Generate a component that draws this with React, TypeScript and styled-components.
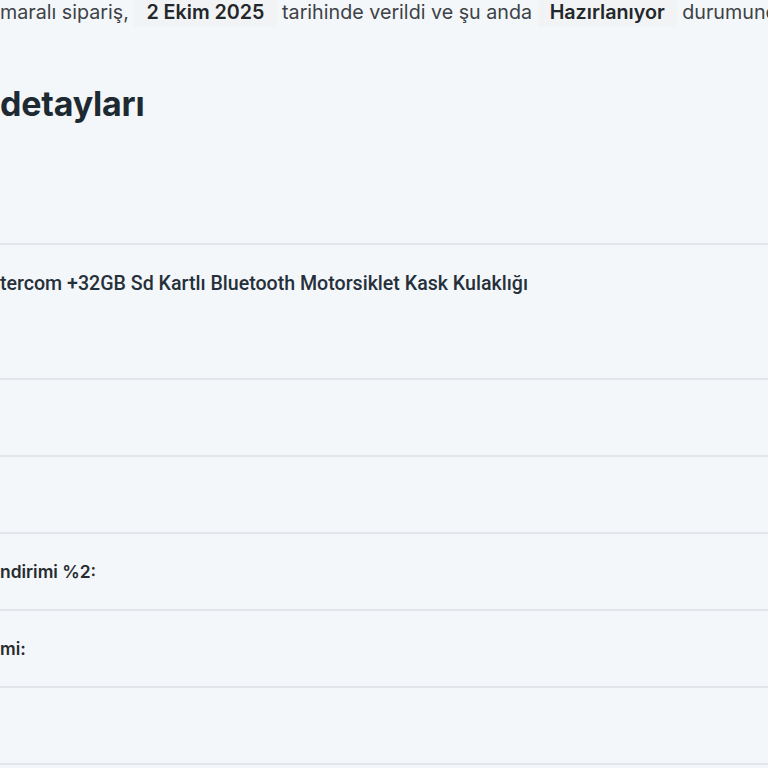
import type { ReactElement } from "react";
import styled, { createGlobalStyle } from "styled-components";

const GlobalStyle = createGlobalStyle`
  html, body {
    margin: 0;
    padding: 0;
    background: #f4f7fa;
  }
`;

const TOTAL_ROWS = ["", "", "ndirimi %2:", "mi:", "", ""];

export default function App(): ReactElement {
  return (
    <Page>
      <GlobalStyle />
      <OrderNotice>
        maralı sipariş, <Highlight>2 Ekim 2025</Highlight> tarihinde verildi ve şu anda{" "}
        <Highlight>Hazırlanıyor</Highlight> durumunda.
      </OrderNotice>
      <SectionTitle>detayları</SectionTitle>
      <OrderTable>
        <TableHead />
        <ProductRow>
          <ProductName>
            tercom +32GB Sd Kartlı Bluetooth Motorsiklet Kask Kulaklığı
          </ProductName>
        </ProductRow>
        {TOTAL_ROWS.map((label, i) => (
          <TotalRow key={i}>
            <TotalLabel>{label}</TotalLabel>
          </TotalRow>
        ))}
      </OrderTable>
    </Page>
  );
}

const Page = styled.div`
  width: 768px;
  height: 768px;
  overflow: hidden;
  background: #f4f7fa;
  display: flex;
  flex-direction: column;
`;

const OrderNotice = styled.p`
  margin: 0;
  font-family: Inter, "Liberation Sans", sans-serif;
  font-size: 19.7px;
  line-height: 24px;
  color: #3d4246;
  white-space: nowrap;
`;

const Highlight = styled.mark`
  background: #f2f3f4;
  color: #22272b;
  font-weight: 600;
  padding: 2px 12px 3px;
`;

const SectionTitle = styled.h2`
  margin: 60px 0 0;
  font-family: Inter, "Liberation Sans", sans-serif;
  font-size: 34px;
  line-height: 40px;
  font-weight: 700;
  color: #1e2a32;
  letter-spacing: -0.2px;
`;

const OrderTable = styled.div`
  display: flex;
  flex-direction: column;
`;

const TableHead = styled.div`
  height: 119px;
`;

const ProductRow = styled.div`
  border-top: 2px solid #e2e6ea;
  padding: 26px 0 81px;
`;

const ProductName = styled.div`
  font-family: Roboto, "Liberation Sans", sans-serif;
  font-size: 19.6px;
  line-height: 26px;
  font-weight: 500;
  color: #25303a;
  white-space: nowrap;
`;

const TotalRow = styled.div`
  border-top: 2px solid #e2e6ea;
  height: 75px;
  display: flex;
  align-items: center;
  flex-shrink: 0;
`;

const TotalLabel = styled.span`
  font-family: Inter, "Liberation Sans", sans-serif;
  font-size: 17.4px;
  line-height: 24px;
  font-weight: 600;
  color: #262b30;
`;
